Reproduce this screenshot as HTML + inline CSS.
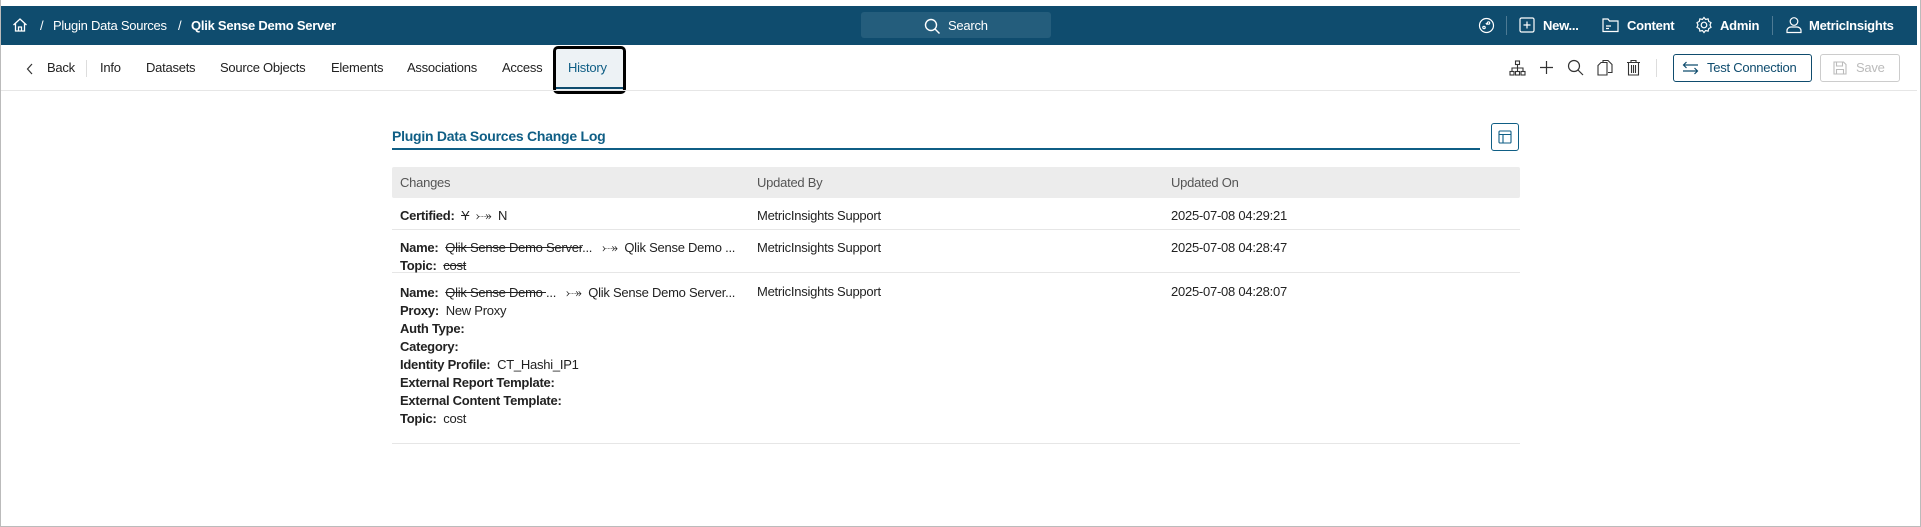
<!DOCTYPE html>
<html><head><meta charset="utf-8"><style>
*{box-sizing:border-box;margin:0;padding:0}
body{width:1921px;height:527px;position:relative;background:#fff;font-family:"Liberation Sans",sans-serif;font-size:13px;letter-spacing:-0.25px;color:#222;overflow:hidden}
.a{position:absolute;white-space:nowrap}
.hdr{left:1px;top:6px;width:1916px;height:39px;background:#0f4c6e;color:#fff}
.hdr .a{top:12px;font-size:13px}
.tab{top:60px;font-size:13px;color:#222}
.ic{position:absolute}
.row{position:absolute;left:392px;width:1128px;border-bottom:1px solid #e6e6e6}
b{font-weight:bold}
.s{text-decoration:line-through}
</style></head><body>
<div class="a" style="left:0;top:0;width:1921px;height:527px;border:1px solid #bbb;border-top:none"></div>
<div class="a hdr">
 <svg class="ic" style="left:11px;top:11px" width="16" height="16" viewBox="0 0 16 16" fill="none" stroke="#fff" stroke-width="1.3"><path d="M1.5 8L8 2l6.5 6M3.5 6.5V14h9V6.5M6.5 14v-4h3v4"/></svg>
 <div class="a" style="left:39px">/</div>
 <div class="a" style="left:52px">Plugin Data Sources</div>
 <div class="a" style="left:177px">/</div>
 <div class="a" style="left:190px;font-weight:bold">Qlik Sense Demo Server</div>
 <div class="a" style="left:860px;top:6px;width:190px;height:26px;background:#245d7c;border-radius:3px"></div>
 <svg class="ic" style="left:923px;top:12px" width="17" height="17" viewBox="0 0 17 17" fill="none" stroke="#fff" stroke-width="1.4"><circle cx="7" cy="7" r="5.5"/><path d="M11 11l4.5 4.5"/></svg>
 <div class="a" style="left:947px">Search</div>
 <svg class="ic" style="left:1477px;top:11px" width="17" height="17" viewBox="0 0 17 17" fill="none" stroke="#fff" stroke-width="1.2"><circle cx="8.5" cy="8.5" r="7"/><circle cx="6" cy="10.5" r="1.2"/><circle cx="10.5" cy="6" r="1.2"/><path d="M8 6l.5 1 1 .5"/></svg>
 <div class="a" style="left:1505px;top:10px;width:1px;height:19px;background:#4d7a94"></div>
 <svg class="ic" style="left:1518px;top:11px" width="16" height="16" viewBox="0 0 16 16" fill="none" stroke="#fff" stroke-width="1.2"><rect x="1" y="1" width="14" height="14" rx="1.5"/><path d="M8 4.5v7M4.5 8h7"/></svg>
 <div class="a" style="left:1542px;font-weight:bold">New...</div>
 <svg class="ic" style="left:1601px;top:11px" width="17" height="16" viewBox="0 0 17 16" fill="none" stroke="#fff" stroke-width="1.2"><path d="M1 2h5l1.5 2H16v10.5H1z"/><path d="M4 9h5M4 11.5h3"/></svg>
 <div class="a" style="left:1626px;font-weight:bold">Content</div>
 <svg class="ic" style="left:1694px;top:10px" width="18" height="18" viewBox="0 0 18 18" fill="none" stroke="#fff" stroke-width="1.2"><circle cx="9" cy="9" r="2.8"/><path d="M9 1.5l1.6 2 2.5-.6.6 2.5 2.3 1.2-1 2.4 1 2.4-2.3 1.2-.6 2.5-2.5-.6L9 16.5l-1.6-2-2.5.6-.6-2.5-2.3-1.2 1-2.4-1-2.4 2.3-1.2.6-2.5 2.5.6z"/></svg>
 <div class="a" style="left:1719px;font-weight:bold">Admin</div>
 <div class="a" style="left:1771px;top:10px;width:1px;height:19px;background:#4d7a94"></div>
 <svg class="ic" style="left:1785px;top:10px" width="16" height="18" viewBox="0 0 16 18" fill="none" stroke="#fff" stroke-width="1.2"><circle cx="8" cy="5.5" r="3.8"/><path d="M1 16.5v-2c0-2 2-3.5 4-3.5h6c2 0 4 1.5 4 3.5v2z"/></svg>
 <div class="a" style="left:1808px;font-weight:bold">MetricInsights</div>
</div>
<svg class="ic" style="left:26px;top:63px" width="8" height="12" viewBox="0 0 8 12" fill="none" stroke="#333" stroke-width="1.2"><path d="M6 1L1.5 6 6 11"/></svg>
<div class="a tab" style="left:47px">Back</div>
<div class="a" style="left:86px;top:60px;width:1px;height:17px;background:#ddd"></div>
<div class="a tab" style="left:100px">Info</div>
<div class="a tab" style="left:146px">Datasets</div>
<div class="a tab" style="left:220px">Source Objects</div>
<div class="a tab" style="left:331px">Elements</div>
<div class="a tab" style="left:407px">Associations</div>
<div class="a tab" style="left:502px">Access</div>
<div class="a" style="left:553px;top:46px;width:73px;height:48px;border:3px solid #000;border-radius:5px;background:#edf2f5"></div>
<div class="a" style="left:556px;top:87px;width:67px;height:2px;background:#0f4c6e"></div>
<div class="a tab" style="left:568px;color:#0f5e85">History</div>
<div class="a" style="left:1px;top:90px;width:1916px;height:1px;background:#e6e6e6"></div>
<svg class="ic" style="left:1509px;top:60px" width="17" height="16" viewBox="0 0 17 16" fill="none" stroke="#333" stroke-width="1.1"><rect x="6.5" y="1" width="4" height="3.5"/><rect x="1" y="11.5" width="4" height="3.5"/><rect x="6.5" y="11.5" width="4" height="3.5"/><rect x="12" y="11.5" width="4" height="3.5"/><path d="M8.5 4.5v7M3 11.5V8h11v3.5"/></svg>
<svg class="ic" style="left:1539px;top:60px" width="15" height="15" viewBox="0 0 15 15" fill="none" stroke="#333" stroke-width="1.2"><path d="M7.5 1v13M1 7.5h13"/></svg>
<svg class="ic" style="left:1567px;top:59px" width="17" height="17" viewBox="0 0 17 17" fill="none" stroke="#333" stroke-width="1.2"><circle cx="7" cy="7" r="5.5"/><path d="M11 11l5 5"/></svg>
<svg class="ic" style="left:1597px;top:59px" width="16" height="17" viewBox="0 0 16 17" fill="none" stroke="#333" stroke-width="1.1"><path d="M6 4V1.5h5l4 4v8h-4"/><path d="M1 6.5L4 3.5h6v12.5H1z"/></svg>
<svg class="ic" style="left:1626px;top:59px" width="15" height="17" viewBox="0 0 15 17" fill="none" stroke="#333" stroke-width="1.1"><path d="M1 3.5h13M5 3.5V1.5h5v2M2.5 3.5v12.5h10V3.5M5.5 6v8M7.5 6v8M9.5 6v8"/></svg>
<div class="a" style="left:1656px;top:59px;width:1px;height:18px;background:#ddd"></div>
<div class="a" style="left:1673px;top:54px;width:139px;height:28px;border:1px solid #0f4c6e;border-radius:3px"></div>
<svg class="ic" style="left:1682px;top:61px" width="17" height="14" viewBox="0 0 17 14" fill="none" stroke="#0f4c6e" stroke-width="1.2"><path d="M16 4H1.5M4.5 1L1.5 4l3 3M1 10h14.5M12.5 7l3 3-3 3"/></svg>
<div class="a" style="left:1707px;top:60px;color:#0f4c6e">Test Connection</div>
<div class="a" style="left:1820px;top:54px;width:80px;height:28px;border:1px solid #ccc;border-radius:3px"></div>
<svg class="ic" style="left:1833px;top:61px" width="14" height="14" viewBox="0 0 14 14" fill="none" stroke="#bbb" stroke-width="1.1"><path d="M1 1h9.5L13 3.5V13H1z"/><path d="M3.5 1v4h6V1M3.5 13V8.5h7V13"/></svg>
<div class="a" style="left:1856px;top:60px;color:#bbb">Save</div>
<div class="a" style="left:392px;top:128px;font-size:14px;font-weight:bold;color:#0f5e85">Plugin Data Sources Change Log</div>
<div class="a" style="left:392px;top:148px;width:1088px;height:2px;background:#0f5e85"></div>
<div class="a" style="left:1491px;top:123px;width:28px;height:28px;border:1px solid #0f5e85;border-radius:3px"></div>
<svg class="ic" style="left:1498px;top:130px" width="14" height="14" viewBox="0 0 14 14" fill="none" stroke="#0f5e85" stroke-width="1.1"><rect x="1" y="1" width="12" height="12" rx="1"/><path d="M1 4.5h12M5 4.5V13"/></svg>
<div class="a" style="left:392px;top:167px;width:1128px;height:31px;background:#ececec;border-radius:2px"></div>
<div class="a" style="left:400px;top:175px;color:#555">Changes</div>
<div class="a" style="left:757px;top:175px;color:#555">Updated By</div>
<div class="a" style="left:1171px;top:175px;color:#555">Updated On</div>
<div class="row" style="top:198px;height:32px"></div>
<div class="a" style="left:400px;top:208px"><b>Certified:</b>&nbsp; <span class="s">Y</span> &nbsp;⤐&nbsp; N</div>
<div class="a" style="left:757px;top:208px">MetricInsights Support</div>
<div class="a" style="left:1171px;top:208px">2025-07-08 04:29:21</div>
<div class="row" style="top:230px;height:43px"></div>
<div class="a" style="left:400px;top:240px"><b>Name:</b>&nbsp; <span class="s">Qlik Sense Demo Server</span>... &nbsp;&nbsp;⤐&nbsp; Qlik Sense Demo ...</div>
<div class="a" style="left:400px;top:258px"><b>Topic:</b>&nbsp; <span class="s">cost</span></div>
<div class="a" style="left:757px;top:240px">MetricInsights Support</div>
<div class="a" style="left:1171px;top:240px">2025-07-08 04:28:47</div>
<div class="row" style="top:273px;height:171px"></div>
<div class="a" style="left:400px;top:284px;line-height:18px"><b>Name:</b>&nbsp; <span class="s">Qlik Sense Demo </span>... &nbsp;&nbsp;⤐&nbsp; Qlik Sense Demo Server...<br><b>Proxy:</b>&nbsp; New Proxy<br><b>Auth Type:</b><br><b>Category:</b><br><b>Identity Profile:</b>&nbsp; CT_Hashi_IP1<br><b>External Report Template:</b><br><b>External Content Template:</b><br><b>Topic:</b>&nbsp; cost</div>
<div class="a" style="left:757px;top:284px">MetricInsights Support</div>
<div class="a" style="left:1171px;top:284px">2025-07-08 04:28:07</div>
</body></html>
